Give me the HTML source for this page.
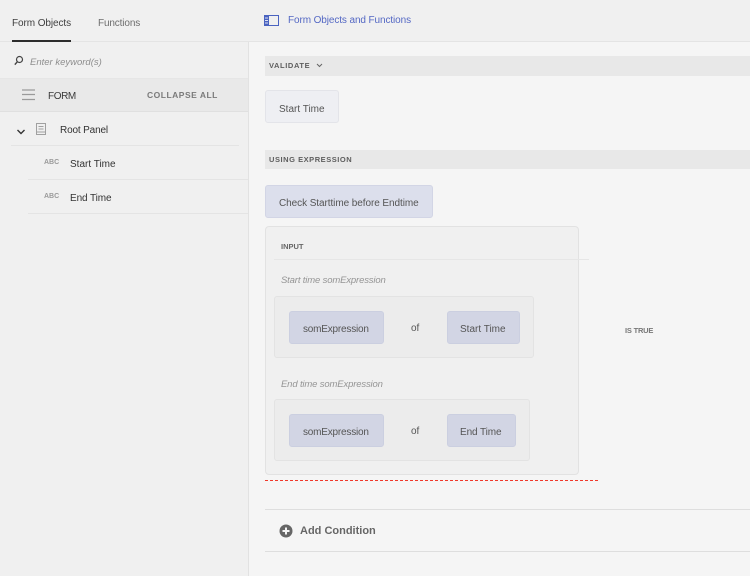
<!DOCTYPE html>
<html><head><meta charset="utf-8">
<style>
html,body{margin:0;padding:0}
body{width:750px;height:576px;overflow:hidden;background:#f5f5f5;position:relative;font-family:"Liberation Sans",sans-serif;color:#4b4b4b}
.b{position:absolute;box-sizing:border-box}
.t{position:absolute;white-space:nowrap;font-size:10px;line-height:14px}
.chip{position:absolute;box-sizing:border-box;border:1px solid #cbcfe0;border-radius:3px;background:#d2d5e4}
</style></head><body>
<!-- left panel -->
<div class="b" style="left:0;top:0;width:249px;height:576px;background:#f0f0f0;border-right:1px solid #e2e2e2"></div>
<div class="b" style="left:0;top:0;width:750px;height:42px;background:#f0f0f0;border-bottom:1px solid #e4e4e4"></div>
<div class="t" style="left:12px;top:17px;color:#3f3f3f;letter-spacing:-.08px">Form Objects</div>
<div class="t" style="left:98px;top:17px;color:#6e6e6e;letter-spacing:-.14px">Functions</div>
<div class="b" style="left:12px;top:40px;width:59px;height:2px;background:#2c2c2c"></div>
<svg class="b" style="left:13px;top:54px" width="13" height="13" viewBox="0 0 13 13"><circle cx="6.500" cy="5.500" r="3" fill="none" stroke="#444" stroke-width="1.200"/><path d="M4.300 7.800L1.800 10.600" stroke="#444" stroke-width="1.400"/></svg>
<div class="t" style="left:30px;top:56px;font-size:9.500px;font-style:italic;color:#8e8e8e">Enter keyword(s)</div>
<div class="b" style="left:0;top:78px;width:248px;height:34px;background:#e9e9e9;border-bottom:1px solid #e0e0e0;border-top:1px solid #e6e6e6"></div>
<svg class="b" style="left:22px;top:89px" width="13" height="12" viewBox="0 0 13 12"><path d="M0 1h13M0 5.500h13M0 10.500h13" stroke="#9a9a9a" stroke-width="1.200" fill="none"/></svg>
<div class="t" style="left:48px;top:90px;color:#3a3a3a;letter-spacing:-.4px">FORM</div>
<div class="t" style="left:147px;top:88px;font-weight:bold;font-size:8.500px;letter-spacing:.5px;color:#7a7a7a">COLLAPSE ALL</div>
<svg class="b" style="left:16px;top:128px" width="10" height="8" viewBox="0 0 10 8"><path d="M1.500 2L5 5.500L8.500 2" fill="none" stroke="#333" stroke-width="1.400"/></svg>
<svg class="b" style="left:35px;top:123px" width="12" height="13" viewBox="0 0 12 13"><path d="M1.500.5h9v11h-9zM3.500 3.500h5M3.500 6h5M1.500 9h9" fill="none" stroke="#a0a0a0" stroke-width="1"/></svg>
<div class="t" style="left:60px;top:124px;color:#333;letter-spacing:-.15px">Root Panel</div>
<div class="b" style="left:11px;top:145px;width:228px;height:1px;background:#e4e4e4"></div>
<div class="t" style="left:44px;top:156px;font-size:7px;font-weight:bold;color:#9a9a9a">ABC</div>
<div class="t" style="left:70px;top:158px;color:#333">Start Time</div>
<div class="b" style="left:28px;top:179px;width:220px;height:1px;background:#e4e4e4"></div>
<div class="t" style="left:44px;top:190px;font-size:7px;font-weight:bold;color:#9a9a9a">ABC</div>
<div class="t" style="left:70px;top:192px;color:#333;letter-spacing:-.1px">End Time</div>
<div class="b" style="left:28px;top:213px;width:220px;height:1px;background:#e4e4e4"></div>
<!-- header right -->
<svg class="b" style="left:264px;top:14px" width="15" height="13" viewBox="0 0 15 13"><rect x=".5" y="1.500" width="14" height="10" fill="none" stroke="#4a63c0"/><rect x="0" y="1" width="5" height="11" fill="#4a63c0"/><path d="M1 4h3M1 6.500h3M1 9h3" stroke="#dfe3f5"/></svg>
<div class="t" style="left:288px;top:14px;color:#5468c4;letter-spacing:-.1px">Form Objects and Functions</div>
<!-- validate -->
<div class="b" style="left:265px;top:56px;width:485px;height:20px;background:#e8e8e8"></div>
<div class="t" style="left:269px;top:59px;font-size:7.500px;font-weight:bold;letter-spacing:.6px;color:#5e5e5e">VALIDATE</div>
<svg class="b" style="left:316px;top:63px" width="7" height="5" viewBox="0 0 7 5"><path d="M1 1L3.500 3.500L6 1" fill="none" stroke="#666" stroke-width="1"/></svg>
<div class="b" style="left:265px;top:90px;width:74px;height:33px;background:#eeeff3;border:1px solid #e3e4e9;border-radius:3px"></div>
<div class="t" style="left:279px;top:103px;color:#555">Start Time</div>
<div class="b" style="left:265px;top:150px;width:485px;height:19px;background:#e8e8e8"></div>
<div class="t" style="left:269px;top:153px;font-size:7.500px;font-weight:bold;letter-spacing:.54px;color:#5e5e5e">USING EXPRESSION</div>
<div class="b" style="left:265px;top:185px;width:168px;height:33px;background:#dcdfec;border:1px solid #d2d5e5;border-radius:3px"></div>
<div class="t" style="left:279px;top:197px;color:#555;letter-spacing:-.07px">Check Starttime before Endtime</div>
<!-- input box -->
<div class="b" style="left:265px;top:226px;width:314px;height:249px;background:#f0f0f0;border:1px solid #e2e2e2;border-radius:4px"></div>
<div class="t" style="left:281px;top:240px;font-size:7.500px;font-weight:bold;color:#666">INPUT</div>
<div class="b" style="left:274px;top:259px;width:315px;height:1px;background:#e6e6e6"></div>
<div class="t" style="left:281px;top:274px;font-size:9.500px;font-style:italic;color:#959595;letter-spacing:-.15px">Start time somExpression</div>
<div class="b" style="left:274px;top:296px;width:260px;height:62px;background:#ececec;border:1px solid #e3e3e3;border-radius:3px"></div>
<div class="chip" style="left:289px;top:311px;width:95px;height:33px"></div>
<div class="t" style="left:303px;top:323px;color:#555;letter-spacing:-.2px">somExpression</div>
<div class="t" style="left:411px;top:322px;color:#555">of</div>
<div class="chip" style="left:447px;top:311px;width:73px;height:33px"></div>
<div class="t" style="left:460px;top:323px;color:#555">Start Time</div>
<div class="t" style="left:281px;top:378px;font-size:9.500px;font-style:italic;color:#959595;letter-spacing:-.15px">End time somExpression</div>
<div class="b" style="left:274px;top:399px;width:256px;height:62px;background:#ececec;border:1px solid #e3e3e3;border-radius:3px"></div>
<div class="chip" style="left:289px;top:414px;width:95px;height:33px"></div>
<div class="t" style="left:303px;top:426px;color:#555;letter-spacing:-.2px">somExpression</div>
<div class="t" style="left:411px;top:425px;color:#555">of</div>
<div class="chip" style="left:447px;top:414px;width:69px;height:33px"></div>
<div class="t" style="left:460px;top:426px;color:#555;letter-spacing:-.1px">End Time</div>
<div class="b" style="left:265px;top:480px;width:333px;height:0;border-top:1px dashed #f0392b"></div>
<div class="t" style="left:625px;top:324px;font-size:7.500px;font-weight:bold;color:#777;letter-spacing:-.2px">IS TRUE</div>
<!-- add condition -->
<div class="b" style="left:265px;top:509px;width:485px;height:1px;background:#dedede"></div>
<svg class="b" style="left:279px;top:524px" width="14" height="14" viewBox="0 0 14 14"><circle cx="7" cy="7" r="6.500" fill="#666"/><path d="M7 3.500v7M3.500 7h7" stroke="#f5f5f5" stroke-width="2"/></svg>
<div class="t" style="left:300px;top:524px;font-size:11px;font-weight:bold;color:#666">Add Condition</div>
<div class="b" style="left:265px;top:551px;width:485px;height:1px;background:#dedede"></div>
</body></html>
